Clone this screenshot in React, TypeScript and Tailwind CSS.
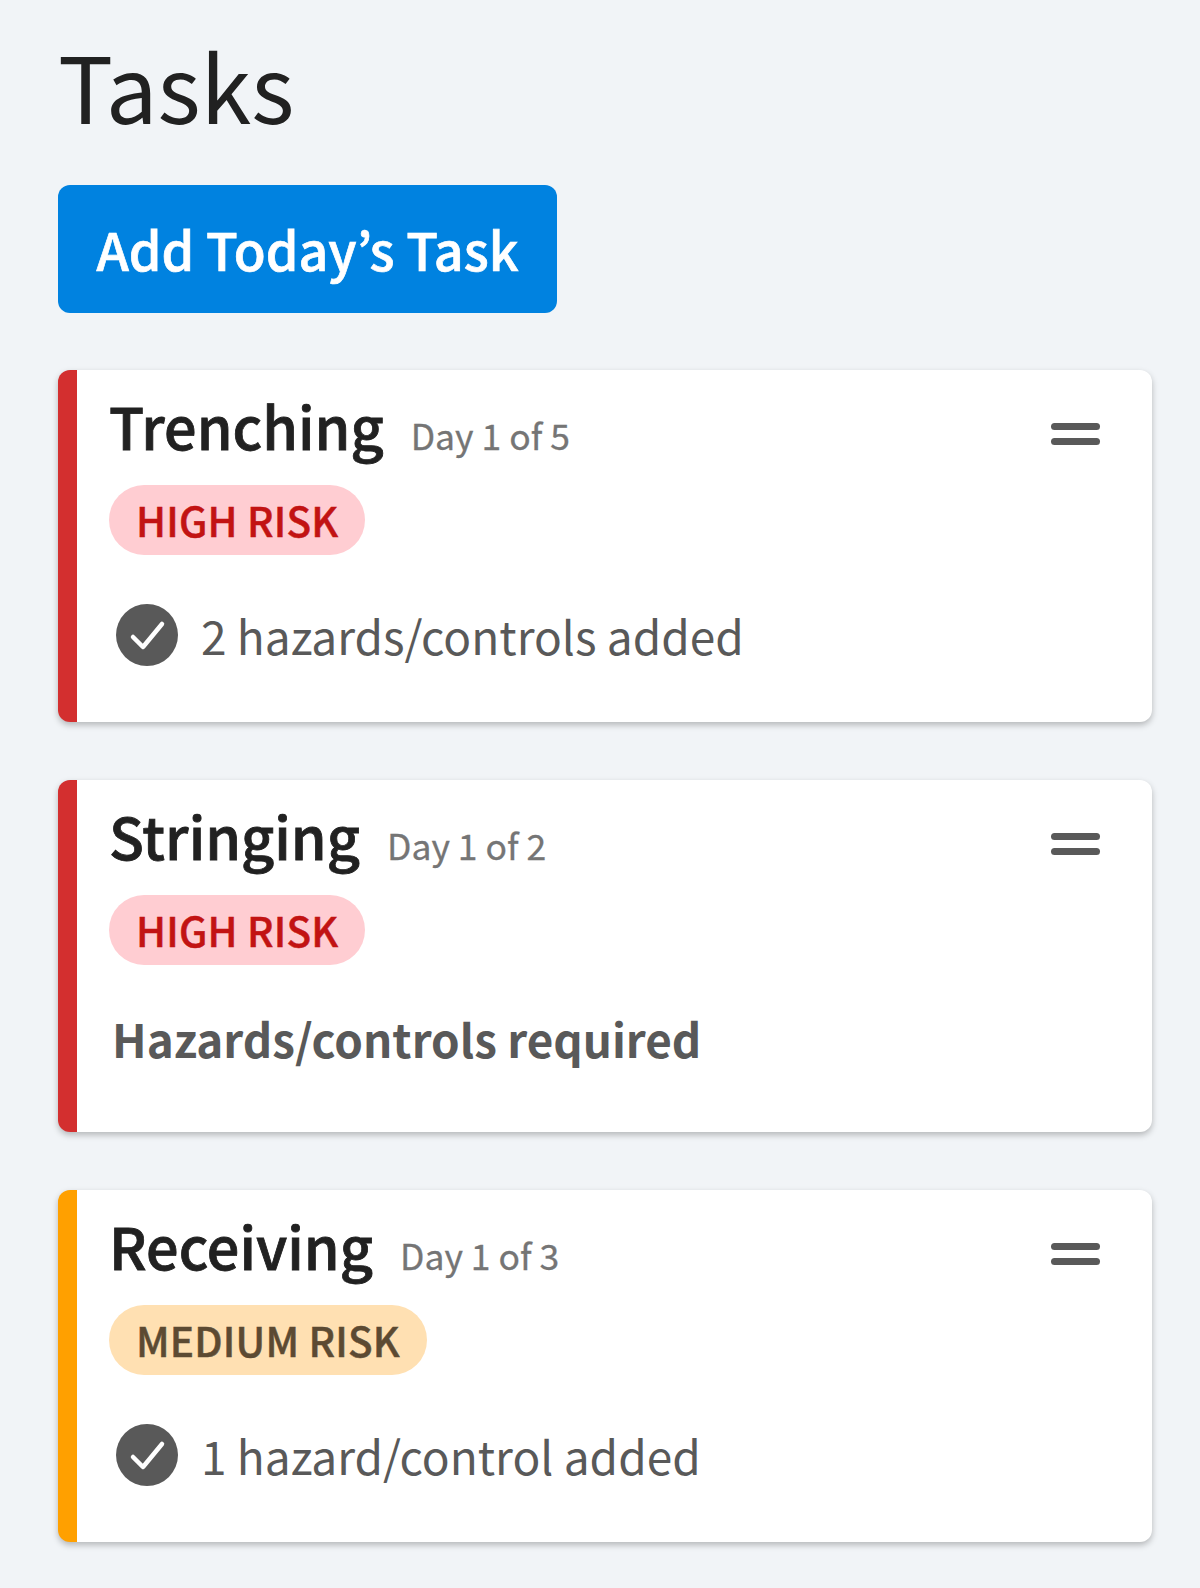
const font = "font-['Noto_Sans_CJK_JP','Noto_Sans',sans-serif]";

type Task = {
  name: string;
  day: string;
  risk: string;
  high: boolean;
  status: string;
  done: boolean;
};

const tasks: Task[] = [
  { name: "Trenching", day: "Day 1 of 5", risk: "HIGH RISK", high: true, status: "2 hazards/controls added", done: true },
  { name: "Stringing", day: "Day 1 of 2", risk: "HIGH RISK", high: true, status: "Hazards/controls required", done: false },
  { name: "Receiving", day: "Day 1 of 3", risk: "MEDIUM RISK", high: false, status: "1 hazard/control added", done: true },
];

function CheckIcon() {
  return (
    <svg width="64" height="64" viewBox="0 0 64 64" className="shrink-0">
      <circle cx="32" cy="32" r="31" fill="#595959" />
      <path d="M18 34 L28 44 L47 21" fill="none" stroke="#fff" strokeWidth="4.5" strokeLinecap="round" strokeLinejoin="round" />
    </svg>
  );
}

function TaskCard({ task }: { task: Task }) {
  return (
    <div
      className={`h-[352px] rounded-[12px] bg-white border-l-[19px] shadow-[0_3px_6px_rgba(0,0,0,0.25)] pl-[32px] pr-[52px] ${
        task.high ? "border-[#d32f2f]" : "border-[#ffa000]"
      }`}
    >
      <div className="flex items-start justify-between pt-[23px]">
        <div className="flex items-baseline gap-[27px]">
          <span className="text-[57.5px] leading-[64px] font-medium text-[#212121] [-webkit-text-stroke:0.8px_currentColor]">
            {task.name}
          </span>
          <span className="text-[35.5px] leading-[40px] text-[#757575] [-webkit-text-stroke:0.3px_currentColor]">
            {task.day}
          </span>
        </div>
        <div className="flex flex-col gap-[8px] pt-[30px]">
          <div className="h-[7px] w-[49px] rounded-full bg-[#595959]" />
          <div className="h-[7px] w-[49px] rounded-full bg-[#595959]" />
        </div>
      </div>
      <div
        className={`mt-[28px] inline-flex h-[70px] items-center rounded-full px-[27px] text-[40.5px] tracking-[0.2px] font-medium [-webkit-text-stroke:0.5px_currentColor] ${
          task.high ? "bg-[#ffcdd2] text-[#c21313]" : "bg-[#ffe0b2] text-[#5c4a32]"
        }`}
      >
        {task.risk}
      </div>
      {task.done ? (
        <div className="mt-[48px] flex items-center gap-[22px] pl-[6px]">
          <CheckIcon />
          <span className="text-[46px] leading-[64px] text-[#595959]">{task.status}</span>
        </div>
      ) : (
        <div className="mt-[41px] pl-[3px] text-[45.8px] leading-[64px] font-bold text-[#595959]">{task.status}</div>
      )}
    </div>
  );
}

export default function App() {
  return (
    <div className={`${font} min-h-[1588px] bg-[#f1f4f7] pl-[58px] pr-[48px] pt-[26px]`}>
      <h1 className="text-[92px] leading-[116px] font-normal text-[#212121]">Tasks</h1>
      <button className="mt-[43px] flex h-[128px] w-[499px] items-center justify-center rounded-[12px] bg-[#0082e0] text-[52px] font-medium text-white [-webkit-text-stroke:0.7px_currentColor]">
        Add Today’s Task
      </button>
      <div className="mt-[57px] flex flex-col gap-[58px]">
        {tasks.map((t) => (
          <TaskCard key={t.name} task={t} />
        ))}
      </div>
    </div>
  );
}
